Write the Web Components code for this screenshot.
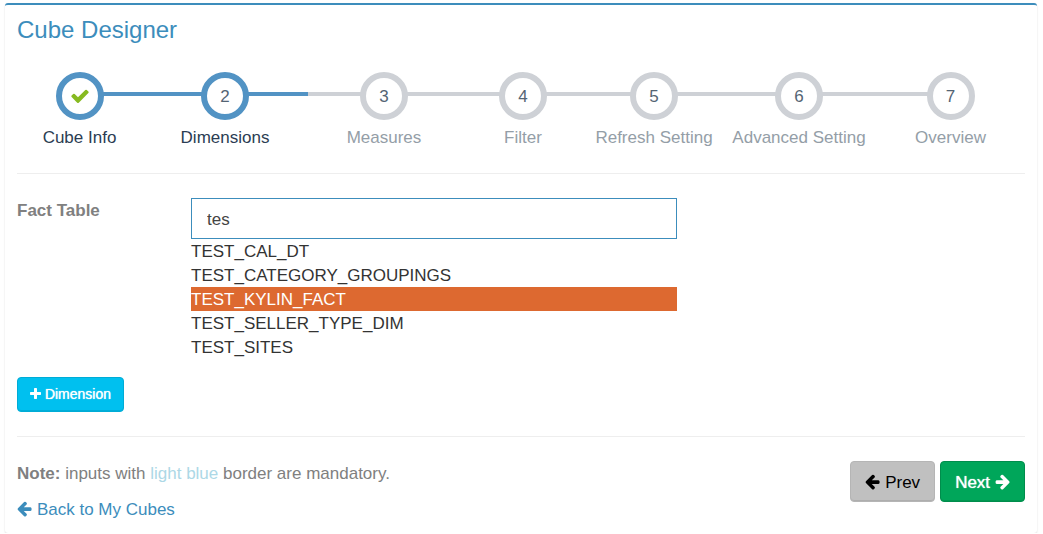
<!DOCTYPE html>
<html lang="en">
<head>
<meta charset="utf-8">
<meta name="viewport" content="width=device-width, initial-scale=1">
<title>Cube Designer</title>
<style>
  body {
    margin: 0;
    padding: 3px 6px 0 5px;
    background: #fff;
    color: #333;
    font: 17px/26px "Liberation Sans", Arial, Helvetica, sans-serif;
  }
  hr { margin: 24px 0; border: 0; border-top: 1px solid #eee; }
  #add { margin-top: 18px; }
</style>
</head>
<body>
<cube-panel heading="Cube Designer">
  <wizard-steps>
    <wizard-step state="done" number="1">Cube Info</wizard-step>
    <wizard-step state="current" number="2">Dimensions</wizard-step>
    <wizard-step number="3">Measures</wizard-step>
    <wizard-step number="4">Filter</wizard-step>
    <wizard-step number="5">Refresh Setting</wizard-step>
    <wizard-step number="6">Advanced Setting</wizard-step>
    <wizard-step number="7">Overview</wizard-step>
  </wizard-steps>
  <hr>
  <suggest-field label="Fact Table" value="tes" selected="TEST_KYLIN_FACT"
    options="TEST_CAL_DT,TEST_CATEGORY_GROUPINGS,TEST_KYLIN_FACT,TEST_SELLER_TYPE_DIM,TEST_SITES"></suggest-field>
  <action-button id="add" kind="info" icon="plus">Dimension</action-button>
  <hr>
  <cube-footer></cube-footer>
</cube-panel>

<script>
  const ICONS = {
    plus: { box: [192, 0, 1408, 1792], path: "M1600 736v192q0 40-28 68t-68 28h-416v416q0 40-28 68t-68 28h-192q-40 0-68-28t-28-68v-416h-416q-40 0-68-28t-28-68v-192q0-40 28-68t68-28h416v-416q0-40 28-68t68-28h192q40 0 68 28t28 68v416h416q40 0 68 28t28 68z" },
    check: { box: [0, 0, 1792, 1792], path: "M1671 566q0 40-28 68l-724 724-136 136q-28 28-68 28t-68-28l-136-136-362-362q-28-28-28-68t28-68l136-136q28-28 68-28t68 28l294 295 656-657q28-28 68-28t68 28l136 136q28 28 28 68z" },
    left: { box: [128, 0, 1600, 1792], path: "M1664 896v128q0 53-32.500 90.500t-84.500 37.500h-704l293 294q38 36 38 90t-38 90l-75 76q-37 37-90 37-52 0-91-37l-651-652q-37-37-37-90 0-52 37-91l651-650q38-38 91-38 52 0 90 38l75 74q38 38 38 91t-38 91l-293 293h704q52 0 84.500 37.500t32.500 90.500z" },
    right: { box: [64, 0, 1600, 1792], path: "M1600 960q0 54-37 91l-651 651q-39 37-91 37-51 0-90-37l-75-75q-38-38-38-91t38-91l293-293h-704q-52 0-84.500-37.500t-32.500-90.500v-128q0-53 32.500-90.500t84.500-37.500h704l-293-294q-38-36-38-90t38-90l75-75q38-38 90-38 53 0 91 38l651 651q37 35 37 90z" }
  };

  class Base extends HTMLElement {
    connectedCallback() {
      if (!this.shadowRoot) this.attachShadow({ mode: "open" }).innerHTML = this.view();
    }
    attr(name) { return this.getAttribute(name) || ""; }
  }

  customElements.define("glyph-icon", class extends Base {
    view() {
      const icon = ICONS[this.attr("name")];
      return `<style>
        :host { display: inline-block; height: var(--icon-size, 17px); vertical-align: -2px; }
        svg { display: block; height: 100%; fill: currentColor; }
      </style>
      <svg viewBox="${icon.box.join(" ")}" aria-hidden="true"><path d="${icon.path}"/></svg>`;
    }
  });

  customElements.define("cube-panel", class extends Base {
    view() {
      return `<style>
        :host { display: block; padding: 12px 12px 10px; background: #fff; border-top: 2px solid #3c8dbc;
          border-radius: 3px; box-shadow: 0 1px 2px rgba(0, 0, 0, .14); }
        h1 { margin: 0 0 29px; font-size: 24px; line-height: 26px; font-weight: 400; color: #3c8dbc; }
      </style>
      <h1>${this.attr("heading")}</h1>
      <slot></slot>`;
    }
  });

  customElements.define("wizard-steps", class extends Base {
    view() {
      this.setAttribute("role", "list");
      return `<style>
        :host { display: grid; grid-template-columns: 125fr 166fr 152fr 126fr 136fr 154fr 149fr; }
      </style><slot></slot>`;
    }
  });

  customElements.define("wizard-step", class extends Base {
    view() {
      this.setAttribute("role", "listitem");
      const mark = this.attr("state") === "done"
        ? '<glyph-icon name="check"></glyph-icon>' : `<span class="digit">${this.attr("number")}</span>`;
      return `<style>
        :host { display: flex; flex-direction: column; gap: 5px; min-width: 0; text-align: center;
          white-space: nowrap; color: #949ea7; --line: #ced1d6; }
        :host([state]) { color: #2b3d53; --line: #5293c4; }
        .track { display: grid; grid-template-columns: 1fr 48px 1fr; }
        .track::before, .track::after { content: ""; height: 4px; margin: 20px -2px 0; background: var(--line); }
        :host(:first-child) .track::before, :host(:last-child) .track::after { visibility: hidden; }
        .track::before { margin-left: 0; }
        .track::after { margin-right: 0; }
        .ring { box-sizing: border-box; height: 48px; border: 6px solid var(--line); border-radius: 50%;
          display: grid; place-items: center; background: #fff; color: #546474; z-index: 1; }
        .digit { padding-top: 2px; }
        .caption { height: 24px; }
        glyph-icon { color: #87ba21; --icon-size: 20px; }
      </style>
      <div class="track"><span class="ring">${mark}</span></div>
      <span class="caption"><slot></slot></span>`;
    }
  });

  customElements.define("suggest-field", class extends Base {
    view() {
      const items = this.attr("options").split(",").map(name =>
        `<li role="option" aria-selected="${name === this.attr("selected")}">${name}</li>`).join("");
      return `<style>
        :host { display: grid; grid-template-columns: 174fr 486fr 348fr; align-items: start; }
        label { font-weight: 700; color: #808080; }
        input { display: block; box-sizing: border-box; width: 100%; height: 41px; margin: 0; padding: 2px 15px 0;
          border: 1px solid #3c8dbc; border-radius: 0; background: #fff; color: #444; font: inherit; outline: 0; }
        ul { margin: 0; padding: 0; list-style: none; }
        li { height: 24px; }
        [aria-selected="true"] { background: #dd6930; color: #fff; }
      </style>
      <label for="entry">${this.attr("label")}</label>
      <div>
        <input id="entry" type="text" role="combobox" aria-expanded="true" aria-controls="matches" value="${this.attr("value")}">
        <ul id="matches" role="listbox">${items}</ul>
      </div>`;
    }
  });

  customElements.define("action-button", class extends Base {
    view() {
      const icon = `<glyph-icon name="${this.attr("icon")}"></glyph-icon>`;
      const trailing = this.hasAttribute("trailing");
      return `<style>
        :host { display: block; width: max-content; }
        button { display: block; height: 41px; padding: 2px 14px 0; border: 1px solid #b5b5b5; border-radius: 4px;
          background: #c0c0c0; color: #000; font: inherit; white-space: nowrap; cursor: pointer;
          box-shadow: inset 0 -1px 0 rgba(0, 0, 0, .09); }
        :host([kind="info"]) button { height: 35px; padding: 0 12px 2px; font-size: 14px; line-height: 20px;
          background: #00c0ef; border-color: #00acd6; color: #fff; text-shadow: 0 0 1px #fff; --icon-size: 14px; }
        :host([kind="success"]) button { background: #00a65a; border-color: #008d4c; color: #fff; text-shadow: 0 0 1px #fff; }
      </style>
      <button type="button">${trailing ? "" : icon} <slot></slot> ${trailing ? icon : ""}</button>`;
    }
  });

  customElements.define("cube-footer", class extends Base {
    view() {
      return `<style>
        :host { display: flex; justify-content: space-between; align-items: flex-start; color: #808080; }
        p { margin: 0 0 10px; }
        p span { color: #add8e6; }
        a { color: #3c8dbc; text-decoration: none; }
        nav { display: flex; gap: 5px; }
      </style>
      <div>
        <p><b>Note:</b> inputs with <span>light blue</span> border are mandatory.</p>
        <a href="#cubes"><glyph-icon name="left"></glyph-icon> Back to My Cubes</a>
      </div>
      <nav>
        <action-button icon="left">Prev</action-button>
        <action-button kind="success" icon="right" trailing>Next</action-button>
      </nav>`;
    }
  });
</script>
</body>
</html>
